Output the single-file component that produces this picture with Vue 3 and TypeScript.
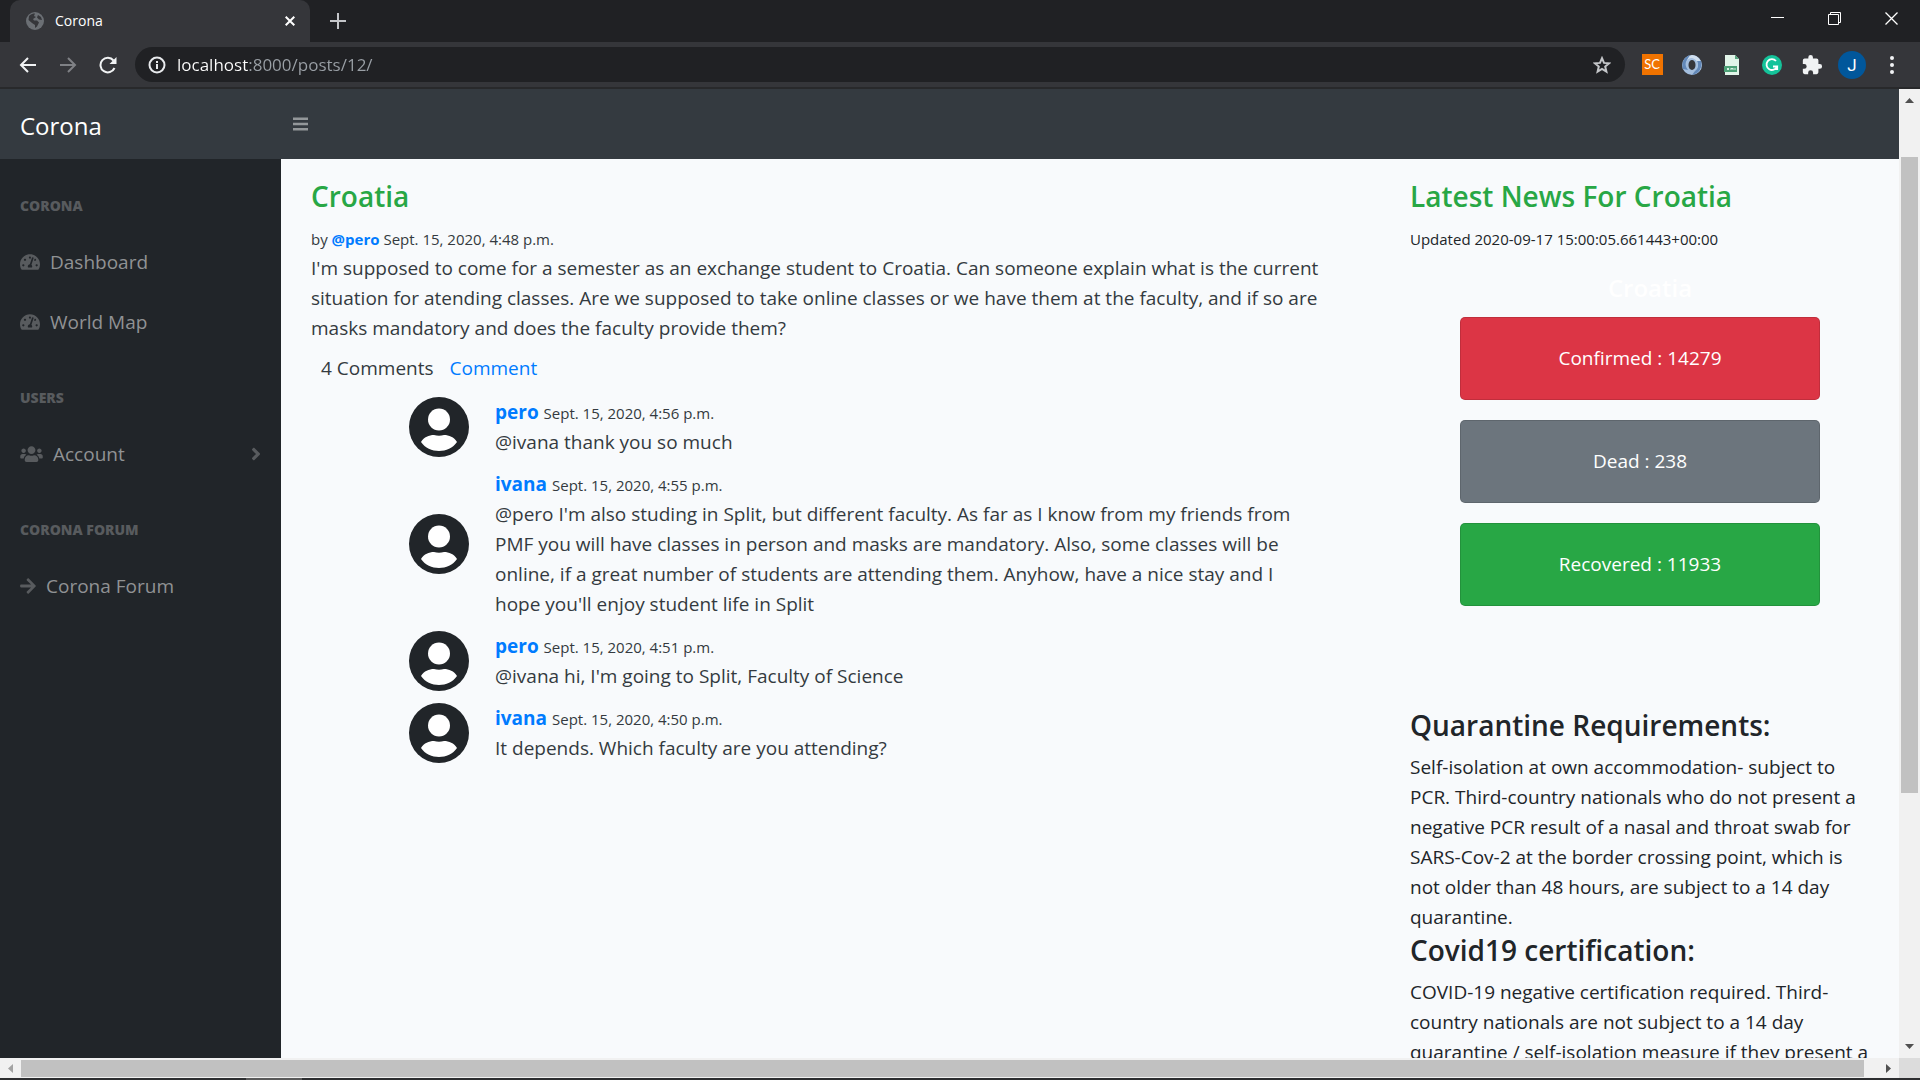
<script setup lang="ts">
interface NavLink { label: string; icon: 'gauge' | 'users' | 'arrow'; expandable?: boolean }
interface NavGroup { heading: string; links: NavLink[] }
interface PostComment { id: number; author: string; date: string; text: string }
interface Stat { label: string; value: number; tone: string }

const navGroups: NavGroup[] = [
  { heading: 'CORONA', links: [{ label: 'Dashboard', icon: 'gauge' }, { label: 'World Map', icon: 'gauge' }] },
  { heading: 'USERS', links: [{ label: 'Account', icon: 'users', expandable: true }] },
  { heading: 'CORONA FORUM', links: [{ label: 'Corona Forum', icon: 'arrow' }] },
]

const icons = {
  gauge: {
    box: '0 0 576 512', width: 20,
    d: 'M288 32C128.94 32 0 160.94 0 320c0 52.8 14.25 102.26 39.06 144.8 5.61 9.62 16.3 15.2 27.44 15.2h443c11.14 0 21.83-5.58 27.44-15.2C561.75 422.26 576 372.8 576 320c0-159.06-128.94-288-288-288zm0 64c14.71 0 26.58 10.13 30.32 23.65-1.11 2.26-2.64 4.23-3.45 6.67l-9.22 27.67c-5.13 3.49-10.97 6.01-17.64 6.01-17.67 0-32-14.33-32-32S270.33 96 288 96zM96 384c-17.67 0-32-14.33-32-32s14.33-32 32-32 32 14.33 32 32-14.33 32-32 32zm48-160c-17.67 0-32-14.33-32-32s14.33-32 32-32 32 14.33 32 32-14.33 32-32 32zm246.77-72.41l-61.33 184C343.13 347.33 352 364.54 352 384c0 11.72-3.38 22.55-8.88 32H232.88c-5.5-9.45-8.88-20.28-8.88-32 0-33.94 26.5-61.43 59.9-63.59l61.34-184.01c4.17-12.56 17.73-19.45 30.36-15.17 12.57 4.19 19.35 17.79 15.17 30.36zm14.66 57.2l15.52-46.55c3.47-1.29 7.13-2.23 11.05-2.23 17.67 0 32 14.33 32 32s-14.33 32-32 32c-11.38-.01-20.89-6.28-26.57-15.22zM480 384c-17.67 0-32-14.33-32-32s14.33-32 32-32 32 14.33 32 32-14.33 32-32 32z',
  },
  users: {
    box: '0 0 640 512', width: 23,
    d: 'M96 224c35.3 0 64-28.7 64-64s-28.7-64-64-64-64 28.7-64 64 28.7 64 64 64zm448 0c35.3 0 64-28.7 64-64s-28.7-64-64-64-64 28.7-64 64 28.7 64 64 64zm32 32h-64c-17.6 0-33.5 7.1-45.1 18.6 40.3 22.1 68.9 62 75.1 109.4h66c17.7 0 32-14.3 32-32v-32c0-35.3-28.7-64-64-64zm-256 0c61.9 0 112-50.1 112-112S381.9 32 320 32 208 82.1 208 144s50.1 112 112 112zm76.8 32h-8.3c-20.8 10-43.9 16-68.5 16s-47.6-6-68.5-16h-8.3C179.6 288 128 339.6 128 403.2V432c0 26.5 21.5 48 48 48h288c26.5 0 48-21.5 48-48v-28.8c0-63.6-51.6-115.2-115.2-115.2zm-223.7-13.4C161.5 263.1 145.6 256 128 256H64c-35.3 0-64 28.7-64 64v32c0 17.7 14.3 32 32 32h65.9c6.3-47.4 34.9-87.3 75.2-109.4z',
  },
  arrow: {
    box: '0 0 448 512', width: 16,
    d: 'M190.5 66.9l22.2-22.2c9.4-9.4 24.6-9.4 33.9 0L441 239c9.4 9.4 9.4 24.6 0 33.9L246.6 467.3c-9.4 9.4-24.6 9.4-33.9 0l-22.2-22.2c-9.5-9.5-9.3-25 .4-34.3L311.4 296H24c-13.3 0-24-10.7-24-24v-32c0-13.3 10.7-24 24-24h287.4L190.9 101.2c-9.8-9.3-10-24.8-.4-34.3z',
  },
}

const comments: PostComment[] = [
  { id: 4, author: 'pero', date: 'Sept. 15, 2020, 4:56 p.m.', text: '@ivana thank you so much' },
  { id: 3, author: 'ivana', date: 'Sept. 15, 2020, 4:55 p.m.', text: "@pero I'm also studing in Split, but different faculty. As far as I know from my friends from PMF you will have classes in person and masks are mandatory. Also, some classes will be online, if a great number of students are attending them. Anyhow, have a nice stay and I hope you'll enjoy student life in Split" },
  { id: 2, author: 'pero', date: 'Sept. 15, 2020, 4:51 p.m.', text: "@ivana hi, I'm going to Split, Faculty of Science" },
  { id: 1, author: 'ivana', date: 'Sept. 15, 2020, 4:50 p.m.', text: 'It depends. Which faculty are you attending?' },
]

const stats: Stat[] = [
  { label: 'Confirmed', value: 14279, tone: 'danger' },
  { label: 'Dead', value: 238, tone: 'muted' },
  { label: 'Recovered', value: 11933, tone: 'success' },
]
</script>

<template>
  <div class="window">
    <header class="tabs">
      <div class="tab">
        <svg width="18" height="18" viewBox="0 0 18 18" aria-hidden="true">
          <circle cx="9" cy="9" r="9" fill="#6b6f74" />
          <path d="M3 4c2-2 4-2.500 6-2.500l-1 2.500 2 1-3 2 1 1.500h3l2 2-2 4-2 1.500v-3l-3-2-3.500-3zM12 3l3 2 1 3-3-.5-2-2z" fill="#35363a" />
        </svg>
        <span class="tab-title">Corona</span>
        <button class="plain" aria-label="Close tab">
          <svg width="10" height="10" viewBox="0 0 10 10"><path d="M.7.7l8.600 8.600M9.300.7L.7 9.300" stroke="#fff" stroke-width="2" /></svg>
        </button>
      </div>
      <button class="plain new-tab" aria-label="New tab">
        <svg width="16" height="16" viewBox="0 0 16 16"><path d="M8 0v16M0 8h16" stroke="#c4c6c9" stroke-width="2" /></svg>
      </button>
      <div class="controls">
        <button class="plain" aria-label="Minimize">
          <svg width="13" height="13" viewBox="0 0 13 13"><path d="M0 5.500h13" stroke="#fff" /></svg>
        </button>
        <button class="plain" aria-label="Restore">
          <svg width="13" height="13" viewBox="0 0 13 13" fill="none" stroke="#fff"><path d="M.5 2.500h10v10H.5zM2.500 2.500v-2h10v10h-2" /></svg>
        </button>
        <button class="plain" aria-label="Close window">
          <svg width="13" height="13" viewBox="0 0 13 13"><path d="M.5.5l12 12M12.500.5l-12 12" stroke="#fff" stroke-width="1.300" /></svg>
        </button>
      </div>
    </header>

    <div class="toolbar">
      <button class="plain slot" aria-label="Back">
        <svg width="18" height="18" viewBox="0 0 18 18" fill="none" stroke="#f1f3f4" stroke-width="2"><path d="M17 9H2M9 2L2 9l7 7" /></svg>
      </button>
      <button class="plain slot" aria-label="Forward">
        <svg width="18" height="18" viewBox="0 0 18 18" fill="none" stroke="#7f8185" stroke-width="2"><path d="M1 9h15M9 2l7 7-7 7" /></svg>
      </button>
      <button class="plain slot" aria-label="Reload">
        <svg width="18" height="18" viewBox="0 0 18 18" fill="none" stroke="#f1f3f4" stroke-width="2"><path d="M15.500 12A7.300 7.300 0 1 1 14.500 4.500" /><path d="M17.500 1v7h-7z" fill="#f1f3f4" stroke="none" /></svg>
      </button>
      <div class="omnibox">
        <svg width="18" height="18" viewBox="0 0 18 18" fill="none" stroke="#e8eaed" stroke-width="2" aria-hidden="true"><circle cx="9" cy="9" r="7.500" /><path d="M9 8v5M9 5v2" /></svg>
        <input class="url" aria-label="Address" value="localhost:8000/posts/12/">
        <button class="plain slot" aria-label="Bookmark">
          <svg width="18" height="18" viewBox="0 0 18 18" fill="none" stroke="#c4c6c9" stroke-width="2"><path d="M9 2.200l2 4.700 5 .4-3.800 3.300 1.200 5L9 13l-4.400 2.600 1.200-5L2 7.300l5-.4z" /></svg>
        </button>
      </div>
      <button class="plain slot" aria-label="SC extension"><span class="sc">SC</span></button>
      <button class="plain slot" aria-label="Ring extension">
        <svg width="22" height="22" viewBox="0 0 22 22">
          <circle cx="11" cy="11" r="10" fill="#a3bede" />
          <path d="M11 1a10 10 0 0 1 8 15l-3-1c2-4 1-9-5-11-3 0-5 2-6 4 0-4 3-6 6-7z" fill="#d0dfee" />
          <path d="M20 7c2 6-2 13-9 14l3-4c3-2 4-6 2-10zM2 15c-2-6 1-12 7-14L6 6c-2 3-2 6 1 10z" fill="#6288b8" />
          <ellipse cx="11" cy="11" rx="3.500" ry="5" fill="#35363a" />
        </svg>
      </button>
      <button class="plain slot" aria-label="Sheet extension">
        <svg width="16" height="22" viewBox="0 0 16 22">
          <path d="M1 1h10l4 4v16H1z" fill="#e2f5e9" /><path d="M11 1l4 4h-4z" fill="#57a67f" />
          <path d="M0 12h13v6H0z" fill="#4da177" /><path d="M3 14l2 2m0-2l-2 2m4 0v-2l1 1 1-1v2m2-2v2" stroke="#d4f2e2" fill="none" />
        </svg>
      </button>
      <button class="plain slot" aria-label="Writing extension">
        <svg width="20" height="20" viewBox="0 0 20 20" fill="none">
          <circle cx="10" cy="10" r="10" fill="#15c39a" />
          <path d="M14 6a5.400 5.400 0 1 0 1 5.500h-4M15.200 11v4" stroke="#fff" stroke-width="1.800" />
        </svg>
      </button>
      <button class="plain slot" aria-label="Extensions">
        <svg width="22" height="22" viewBox="0 0 24 24" fill="#f1f3f4"><path d="M20.500 11H19V7a2 2 0 0 0-2-2h-4V3.500a2.500 2.500 0 0 0-5 0V5H4a2 2 0 0 0-2 2v3.800h1.500a2.700 2.700 0 0 1 0 5.400H2V20a2 2 0 0 0 2 2h3.800v-1.500a2.700 2.700 0 0 1 5.400 0V22H17a2 2 0 0 0 2-2v-4h1.500a2.500 2.500 0 0 0 0-5z" /></svg>
      </button>
      <button class="plain slot" aria-label="Profile"><span class="profile">J</span></button>
      <button class="plain slot" aria-label="Menu">
        <svg width="4" height="18" viewBox="0 0 4 18" fill="#f1f3f4"><circle cx="2" cy="2" r="2" /><circle cx="2" cy="9" r="2" /><circle cx="2" cy="16" r="2" /></svg>
      </button>
    </div>

    <div class="viewport">
      <div class="page">
        <nav class="navbar">
          <a class="brand" href="#">Corona</a>
          <button class="plain" aria-label="Toggle sidebar">
            <svg width="15" height="14" viewBox="0 0 15 14" stroke="#93979a" stroke-width="2.500"><path d="M0 1.700h15M0 7h15M0 12.300h15" /></svg>
          </button>
        </nav>
        <div class="body">
          <aside class="sidebar">
            <template v-for="group in navGroups" :key="group.heading">
              <h6 class="nav-heading">{{ group.heading }}</h6>
              <a v-for="link in group.links" :key="link.label" class="nav-link" href="#">
                <svg :width="icons[link.icon].width" height="18" :viewBox="icons[link.icon].box" class="nav-icon" aria-hidden="true"><path :d="icons[link.icon].d" /></svg>
                <span class="nav-label">{{ link.label }}</span>
                <svg v-if="link.expandable" width="10" height="20" viewBox="0 0 256 512" class="nav-icon" aria-hidden="true"><path d="M224.300 273l-136 136c-9.400 9.400-24.600 9.400-33.900 0l-22.600-22.600c-9.400-9.400-9.400-24.600 0-33.900l96.400-96.400-96.400-96.400c-9.400-9.400-9.400-24.600 0-33.900L54.300 103c9.400-9.400 24.600-9.400 33.900 0l136 136c9.500 9.400 9.500 24.600.1 34z" /></svg>
              </a>
            </template>
          </aside>
          <main class="content">
            <article class="post">
              <h4 class="title green">Croatia</h4>
              <div><small>by <a class="author" href="#">@pero</a> Sept. 15, 2020, 4:48 p.m.</small></div>
              <p>I'm supposed to come for a semester as an exchange student to Croatia. Can someone explain what is the current situation for atending classes. Are we supposed to take online classes or we have them at the faculty, and if so are masks mandatory and does the faculty provide them?</p>
              <div class="actions"><span>4 Comments</span><a href="#">Comment</a></div>
              <ul class="comments">
                <li v-for="comment in comments" :key="comment.id" class="comment">
                  <svg width="60" height="60" viewBox="0 0 60 60" aria-hidden="true">
                    <circle cx="30" cy="30" r="30" fill="#212529" />
                    <circle cx="30" cy="22.500" r="11" fill="#fff" />
                    <path d="M12 45c3-5 8-7 13-7q5 1.500 10 0c5 0 10 2 13 7-4 6-11 9-18 9s-14-3-18-9z" fill="#fff" />
                  </svg>
                  <div>
                    <div><a class="author" href="#">{{ comment.author }}</a>&nbsp;<small>{{ comment.date }}</small></div>
                    <p>{{ comment.text }}</p>
                  </div>
                </li>
              </ul>
            </article>
            <section class="news">
              <h4 class="title green">Latest News For Croatia</h4>
              <div><small>Updated 2020-09-17 15:00:05.661443+00:00</small></div>
              <h5 class="country">Croatia</h5>
              <div class="stats">
                <div v-for="stat in stats" :key="stat.label" class="stat" :class="stat.tone">{{ stat.label }} : {{ stat.value }}</div>
              </div>
              <h4 class="title">Quarantine Requirements:</h4>
              <p>Self-isolation at own accommodation- subject to PCR. Third-country nationals who do not present a negative PCR result of a nasal and throat swab for SARS-Cov-2 at the border crossing point, which is not older than 48 hours, are subject to a 14 day quarantine.</p>
              <h4 class="title">Covid19 certification:</h4>
              <p>COVID-19 negative certification required. Third-country nationals are not subject to a 14 day quarantine / self-isolation measure if they present a</p>
            </section>
          </main>
        </div>
      </div>
      <div class="vbar">
        <svg width="9" height="5" viewBox="0 0 9 5" fill="#505050"><path d="M0 5l4.500-5L9 5z" /></svg>
        <div class="vtrack"><div class="vthumb"></div></div>
        <svg width="9" height="5" viewBox="0 0 9 5" fill="#505050"><path d="M0 0l4.500 5L9 0z" /></svg>
      </div>
    </div>
    <div class="hbar">
      <svg width="5" height="9" viewBox="0 0 5 9" fill="#a3a3a3"><path d="M5 0L0 4.500 5 9z" /></svg>
      <div class="hthumb"></div>
      <svg width="5" height="9" viewBox="0 0 5 9" fill="#505050"><path d="M0 0l5 4.500L0 9z" /></svg>
      <div class="corner"></div>
    </div>
    <div class="taskbar"><div class="task"></div></div>
  </div>
</template>

<style>
body { margin: 0; }
</style>

<style scoped>
* { box-sizing: border-box; }
.window {
  display: flex;
  flex-direction: column;
  height: 100vh;
  overflow: hidden;
  font-family: "Open Sans", "Noto Sans", sans-serif;
  font-size: 19px;
  line-height: 30px;
  color: #212529;
}
svg { display: block; flex: none; }
h4, h5, h6, p, ul { margin: 0; padding: 0; }
a { color: #007bff; text-decoration: none; }
small { font-size: 15px; line-height: 20px; }
.plain {
  display: flex;
  align-items: center;
  justify-content: center;
  padding: 0;
  border: 0;
  background: none;
  font: inherit;
}

.tabs { display: flex; flex: none; height: 42px; padding-left: 10px; background: #202124; }
.tab {
  display: flex;
  align-items: center;
  width: 300px;
  padding: 0 15px 0 16px;
  border-radius: 10px 10px 0 0;
  background: #35363a;
  color: #fff;
}
.tab-title { flex: 1; padding-left: 11px; font-size: 14px; line-height: 20px; }
.new-tab { width: 56px; }
.controls { display: flex; margin-left: auto; height: 37px; }
.controls button { width: 57px; }

.toolbar {
  display: flex;
  flex: none;
  align-items: center;
  height: 47px;
  padding: 0 8px;
  border-bottom: 2px solid #28292b;
  background: #35363a;
}
.slot { flex: none; width: 40px; height: 35px; }
.omnibox {
  display: flex;
  flex: 1;
  align-items: center;
  height: 35px;
  margin: 0 7px;
  padding: 0 3px 0 13px;
  border-radius: 18px;
  background: #202124;
}
.url {
  flex: 1;
  height: 30px;
  margin-left: 11px;
  padding: 0;
  border: 0;
  outline: 0;
  font: inherit;
  font-size: 17px;
  color: transparent;
  background: linear-gradient(90deg, #fff 72px, #9aa0a6 72px);
  -webkit-background-clip: text;
  background-clip: text;
}
.sc {
  width: 21px;
  height: 21px;
  background: #f07300;
  color: #fff;
  font-family: Lato, sans-serif;
  font-size: 13px;
  line-height: 21px;
}
.profile {
  width: 28px;
  height: 28px;
  border-radius: 50%;
  background: #01579b;
  color: #fff;
  font-family: Roboto, sans-serif;
  font-size: 17px;
  line-height: 28px;
}

.viewport { display: flex; flex: 1; min-height: 0; }
.page { display: flex; flex: 1; flex-direction: column; min-width: 0; overflow: hidden; }
.navbar { display: flex; flex: none; align-items: center; height: 70px; background: #343a40; }
.brand { width: 293px; padding: 3px 20px 0; color: #fff; font-size: 24px; }
.body { display: flex; flex: 1; min-height: 0; }
.sidebar { flex: none; width: 281px; padding-top: 1px; background: #212529; }
.nav-heading {
  padding: 35px 20px 15px;
  color: #585b5e;
  font-size: 14px;
  font-weight: 800;
  line-height: 22px;
}
.nav-link { display: flex; align-items: center; gap: 10px; padding: 15px 20px; color: #909294; }
.nav-label { flex: 1; }
.nav-icon { fill: #585b5e; }

.content {
  display: flex;
  flex: 1;
  align-items: flex-start;
  min-width: 0;
  padding: 20px 9px 20px 30px;
  background: #f8fafc;
}
.post { flex: 1; min-width: 0; padding-right: 70px; color: #343a40; }
.title { margin-bottom: 10px; font-size: 28px; font-weight: 600; line-height: 34px; }
.green { color: #28a745; }
.author { font-weight: 700; }
.actions { display: flex; gap: 16px; margin: 10px; }
.comments { display: flex; flex-direction: column; gap: 12px; margin: 14px 30px 0 98px; list-style: none; }
.comment { display: flex; align-items: center; gap: 26px; }

.news { flex: none; width: 480px; }
.news p { margin-bottom: 1px; padding-right: 20px; }
.country { margin: 20px 0 14px; color: #fff; font-size: 24px; font-weight: 600; text-align: center; }
.stats { display: flex; flex-direction: column; gap: 20px; margin: 0 70px 102px 50px; }
.stat {
  padding: 25px 20px 26px;
  border: 1px solid rgba(0, 0, 0, .125);
  border-radius: 5px;
  color: #fff;
  text-align: center;
}
.danger { background: #dc3545; }
.muted { background: #6c757d; }
.success { background: #28a745; }

.vbar {
  display: flex;
  flex: none;
  flex-direction: column;
  align-items: center;
  width: 21px;
  padding: 9px 0;
  background: #f1f1f1;
}
.vtrack { flex: 1; width: 17px; padding: 54px 0 16px; }
.vthumb { height: 73%; background: #c1c1c1; }
.hbar { display: flex; flex: none; align-items: center; height: 20px; padding-left: 8px; background: #f1f1f1; }
.hthumb { flex: 1; height: 17px; margin: 0 22px 0 8px; background: #c1c1c1; }
.corner { width: 21px; height: 20px; margin-left: 8px; background: #dcdcdc; }
.taskbar { flex: none; height: 2px; padding-left: 246px; background: #2d2e30; }
.task { width: 56px; height: 2px; background: #5a5a5a; }
</style>
